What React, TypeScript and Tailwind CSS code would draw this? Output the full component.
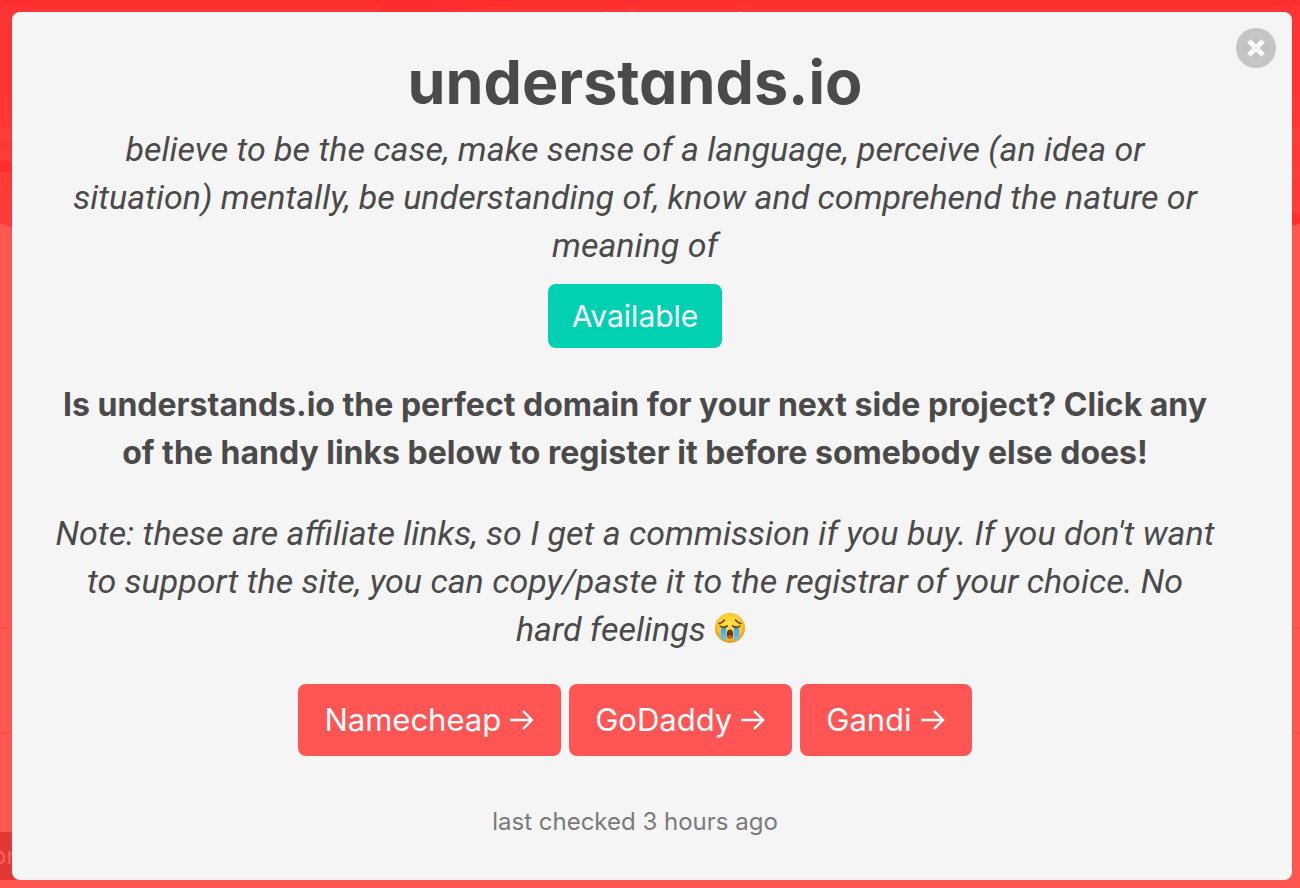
import type { ReactNode } from "react";

type Registrar = {
  name: string;
  href: string;
};

const registrars: Registrar[] = [
  { name: "Namecheap", href: "#namecheap" },
  { name: "GoDaddy", href: "#godaddy" },
  { name: "Gandi", href: "#gandi" },
];

const CryingFace = () => (
  <svg
    viewBox="0 0 32 32"
    role="img"
    aria-label="Loudly crying face"
    className="-mt-2 mr-2 inline-block size-8 align-middle"
  >
    <defs>
      <radialGradient id="face" cx="50%" cy="40%" r="60%">
        <stop offset="0%" stopColor="#ffe84a" />
        <stop offset="65%" stopColor="#fdc82b" />
        <stop offset="100%" stopColor="#ee9312" />
      </radialGradient>
      <linearGradient id="tears" x1="0" y1="0" x2="0" y2="1">
        <stop offset="0%" stopColor="#38a4ee" />
        <stop offset="100%" stopColor="#62c6fb" />
      </linearGradient>
    </defs>
    <circle cx="16" cy="16" r="15" fill="url(#face)" />
    <path d="M7 15h5v14q-3-1-5-3.500z" fill="url(#tears)" />
    <path d="M20 15h5v10.500q-2 2.500-5 3.500z" fill="url(#tears)" />
    <ellipse cx="16" cy="22" rx="3.200" ry="4.500" fill="#6b3a12" />
    <path d="M13.800 24.500q2.200-2 4.400 0q-2 2.600-4.400 0z" fill="#f0647a" />
    <path
      d="M5 11.500q3.500-.500 5.500-3.500M27 11.500q-3.500-.500-5.500-3.500M6 14q3.500 2.500 7.500 0M18.500 14q4 2.500 7.500 0"
      fill="none"
      stroke="#6b3a12"
      strokeWidth="1.500"
      strokeLinecap="round"
    />
  </svg>
);

const Backdrop = () => (
  <div aria-hidden="true" className="absolute inset-0 overflow-hidden">
    <svg
      viewBox="0 0 1300 230"
      preserveAspectRatio="none"
      className="h-[230px] w-full"
    >
      <defs>
        <linearGradient id="sky" x1="0" y1="0" x2="0" y2="1">
          <stop offset="0" stopColor="#ff2b2b" />
          <stop offset=".04" stopColor="#ff3434" />
          <stop offset=".3" stopColor="#ff3434" />
          <stop offset="1" stopColor="#ff3c39" />
        </linearGradient>
      </defs>
      <path d="M0 0H1300V224Q1296 224 1288 228H12Q10 226 0 223Z" fill="url(#sky)" />
      <path d="M0 0H1300V3H0ZM386 4H520L430 12H378ZM0 161H12V172H0ZM1288 211L1300 214V223L1288 227Z" fill="#ff2d2d" />
      <path d="M0 128H12V140H0ZM0 150H12V160H0ZM1290 128H1300V145H1290ZM1290 165H1300V178H1290ZM1290 200L1300 202V213L1290 211Z" fill="#ff3e3b" />
      <path d="M606 11h3v1h-3zM631 9h2v3h-2zM738 11h3v1h-3z" fill="#ff5a58" />
    </svg>
    <div className="mt-[397px] h-[107px] border-y-2 border-[#f9504d]" />
    <div className="mt-[98px] flex h-12 w-16 items-center bg-[#e53734]">
      <span className="-ml-2 text-2xl text-[#ff5f5c]">or</span>
    </div>
  </div>
);

const Note = ({ children }: { children: ReactNode }) => (
  <p className="font-['Roboto',sans-serif] text-[34px] leading-12 italic">
    {children}
  </p>
);

const App = () => {
  return (
    <main className="relative flex min-h-screen bg-[#ff5652] pt-3 pr-2 pb-2 pl-3 font-['Inter',sans-serif] text-[#4a4a4a]">
      <Backdrop />
      <section
        role="dialog"
        aria-labelledby="domain"
        className="relative flex-1 rounded-lg bg-[#f5f5f5] pt-8 pr-[74px] pb-10 pl-10 text-center"
      >
        <button
          type="button"
          aria-label="Close"
          className="absolute top-4 right-4 flex size-10 items-center justify-center rounded-full bg-[#c4c4c4]"
        >
          <svg viewBox="0 0 18 18" className="size-[18px]">
            <path d="M2 2L16 16M16 2L2 16" stroke="#fff" strokeWidth="4.600" />
          </svg>
        </button>

        <h1
          id="domain"
          className="mb-[5px] text-[61px] leading-[76px] font-bold [font-feature-settings:'cv11']"
        >
          understands.io
        </h1>
        <Note>
          believe to be the case, make sense of a language, perceive (an idea or
          <br />
          situation) mentally, be understanding of, know and comprehend the nature or
          <br />
          meaning of
        </Note>
        <span className="mt-[15px] inline-flex h-16 items-center rounded-lg bg-[#00d1b2] px-6 align-top text-[30px] text-white">
          Available
        </span>

        <div className="mt-[33px] space-y-8">
          <p className="text-[32px] leading-12 font-bold">
            Is understands.io the perfect domain for your next side project? Click any
            <br />
            of the handy links below to register it before somebody else does!
          </p>
          <Note>
            Note: these are affiliate links, so I get a commission if you buy. If you don't want
            <br />
            to support the site, you can copy/paste it to the registrar of your choice. No
            <br />
            hard feelings <CryingFace />
          </Note>
        </div>

        <div className="mt-[31px] flex justify-center gap-2">
          {registrars.map(({ name, href }) => (
            <a
              key={name}
              href={href}
              className="flex h-18 items-center gap-2 rounded-lg bg-[#ff5555] px-[26px] text-[31px] text-white"
            >
              {name}
              <svg viewBox="0 0 26 24" className="h-6 w-[26px]" aria-hidden="true">
                <path
                  d="M1 12H23M14 3L23 12L14 21"
                  fill="none"
                  stroke="currentColor"
                  strokeWidth="2.400"
                />
              </svg>
            </a>
          ))}
        </div>

        <p className="mt-12 text-2xl leading-9 text-[#7a7a7a]">
          last checked 3 hours ago
        </p>
      </section>
    </main>
  );
};

export default App;
